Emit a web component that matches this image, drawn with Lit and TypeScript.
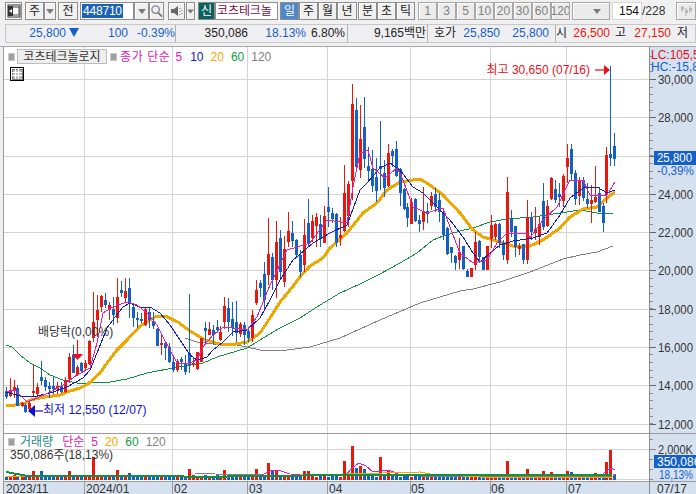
import { LitElement, html, css, svg } from "lit";
import { customElement } from "lit/decorators.js";

type Row = [number, string, number, number, number, number];
type Group = { bx: number; by: number; s: number; rows: Row[] };

const groups: Group[] = [
  { bx: 0, by: 270, s: 3, rows: [
    [18,"b",350,362,380,388],[30,"r",325,360,378,382],[42,"r",330,352,360,385],[52,"b",345,355,408,408],
    [66,"r",395,398,408,410],[76,"b",398,404,425,430],[88,"r",395,398,418,420],[100,"r",285,362,368,378],
    [112,"r",340,352,372,382],[124,"b",272,322,334,345],[136,"b",320,330,350,362],[148,"b",335,348,358,385],
    [160,"b",318,348,358,372],[172,"r",335,348,356,372],[184,"b",335,348,366,368],[196,"r",320,330,365,368],
    [208,"r",250,262,328,340],[220,"b",225,255,308,310],[232,"r",285,290,315,318],[244,"b",275,280,302,305],
    [256,"r",270,280,295,300],[268,"r",210,213,282,285],
  ]},
  { bx: 80, by: 270, s: 3, rows: [
    [40,"r",65,155,205,215],[52,"r",75,120,150,200],[64,"r",75,78,110,125],[76,"b",70,90,105,115],
    [88,"r",95,105,120,150],[100,"b",80,118,135,165],[112,"r",25,82,145,160],[124,"b",32,60,70,80],
    [136,"r",25,62,84,100],[148,"b",25,55,100,145],[160,"b",100,112,143,170],[172,"b",125,145,150,175],
    [184,"b",130,148,152,160],[196,"r",115,118,165,168],[208,"b",112,125,150,175],[220,"b",125,152,168,178],
    [232,"b",175,178,228,228],[244,"r",190,218,222,255],[256,"b",215,218,235,270],[268,"b",220,232,275,278],
    [280,"b",262,276,300,305],[292,"r",268,272,300,305],[304,"b",260,266,276,300],[316,"b",255,282,305,315],
    [328,"b",72,250,285,310],[340,"r",262,280,285,290],[352,"r",245,245,298,300],[364,"r",205,205,275,275],
    [376,"b",155,175,182,225],[388,"r",155,178,195,195],[400,"b",165,180,195,222],[412,"b",150,172,180,190],
    [421,"r",168,185,210,212],[433,"r",80,108,155,178],[445,"b",85,113,155,185],[457,"b",95,148,175,198],
    [470,"b",92,155,190,215],[482,"r",155,162,192,200],[494,"b",155,165,195,225],[506,"b",175,183,205,215],
    [518,"r",120,135,205,215],[530,"r",30,60,100,105],[542,"b",30,40,55,80],
  ]},
  { bx: 0, by: 0, s: 1, rows: [
    [264,"b",262,274,300,310],[268,"r",218,254,275,285],[272,"b",253,257,280,290],[276,"r",221,242,280,298],
    [280,"b",230,238,272,278],[284,"r",236,249,282,287],[300,"b",250,255,272,277],[304,"r",219,235,265,272],
  ]},
  { bx: 230, by: 70, s: 3, rows: [
    [175,"r",426,483,516,530],[187,"b",453,489,513,530],[199,"b",508,510,555,560],[235,"b",387,459,519,530],
    [247,"r",435,453,504,515],[259,"r",430,441,468,530],[271,"b",435,462,507,530],[283,"r",408,438,519,520],
    [295,"b",351,411,427,470],[307,"b",415,430,448,460],[319,"b",428,432,519,530],[331,"r",440,495,504,528],
    [343,"r",285,369,483,485],[355,"r",333,342,438,470],[367,"r",42,102,333,390],[379,"b",85,120,291,300],
    [391,"r",105,207,300,325],[403,"b",81,171,267,295],[415,"b",230,288,303,335],[427,"b",240,297,348,365],
    [439,"b",265,321,364,395],[451,"b",153,288,297,360],[463,"b",270,309,354,382],[475,"r",222,249,348,350],
    [487,"b",238,243,258,290],[499,"b",213,237,318,320],[511,"b",295,298,369,408],[523,"b",355,357,417,420],
    [533,"b",400,411,444,470],[545,"r",385,395,462,462],[557,"b",385,387,453,455],[569,"b",436,449,462,485],
  ]},
  { bx: 400, by: 170, s: 3, rows: [
    [70,"r",50,126,155,180],[82,"b",100,123,132,160],[94,"r",65,78,108,120],[106,"b",55,72,112,125],
    [118,"b",70,90,125,155],[130,"b",115,125,195,210],[142,"b",170,175,252,255],[154,"b",230,232,250,278],
    [166,"b",255,258,278,300],[178,"r",205,246,270,298],[190,"b",228,228,298,300],[202,"b",296,302,322,322],
    [214,"r",295,295,322,322],[226,"r",185,216,285,300],[238,"b",210,212,262,280],[250,"b",262,262,300,300],
    [262,"r",228,228,300,300],[274,"r",135,165,208,235],[286,"r",160,162,202,210],[298,"b",160,162,218,235],
  ]},
  { bx: 500, by: 140, s: 3, rows: [
    [10,"b",300,308,345,360],[22,"r",110,155,360,372],[34,"b",210,235,275,290],[46,"b",258,258,320,350],
    [58,"r",310,318,328,345],[70,"b",312,312,360,372],[82,"r",180,232,360,372],[94,"b",215,232,277,300],
    [106,"r",200,267,280,300],[118,"r",230,252,290,315],[130,"b",128,182,262,270],[142,"r",180,198,258,262],
    [154,"r",110,113,178,180],[166,"b",120,147,180,190],[178,"b",130,162,170,200],[190,"r",102,108,182,200],
    [202,"r",12,54,82,130],[214,"b",12,27,102,120],[226,"b",90,99,178,195],[238,"r",110,120,168,195],
    [250,"b",110,120,175,182],[262,"b",130,178,192,205],[274,"r",135,180,192,250],[286,"r",78,170,185,190],
    [298,"b",140,160,215,215],[310,"b",190,197,250,275],
  ]},
  { bx: 520, by: 60, s: 3, rows: [
    [258,"r",262,286,405,430],[271,"b",18,283,293,318],[284,"b",218,258,298,318],
  ]},
];

type C = { x: number; c: string; hi: number; t: number; b: number; lo: number };
const candles: C[] = groups
  .flatMap((g) =>
    g.rows.map((r) => ({
      x: Math.floor(g.bx + r[0] / g.s),
      c: r[1],
      hi: Math.round(g.by + r[2] / g.s),
      t: Math.round(g.by + r[3] / g.s),
      b: Math.round(g.by + r[4] / g.s),
      lo: Math.round(g.by + r[5] / g.s),
    }))
  )
  .sort((a, b) => a.x - b.x);

const RED = "#e8180c";
const BLUE = "#1560c8";

const ma20 = "6,406 15,405 25,403 30,400 45,397 60,395 67,392 80,388 88,384 100,373 107,363 117,350 127,340 140,326 155,317 165,316 178,322 190,331 205,340 220,344 230,345 247,342 260,333 270,318 280,302 290,290 300,277 310,266 323,258 330,248 347,233 363,213 377,203 387,190 400,182 420,179 430,185 443,195 460,213 473,230 483,237 500,242 513,246 530,246 543,240 560,228 570,217 583,209 597,207 607,198 615,192";
const ma60 = "6,345 12,347 20,355 30,363 40,368 50,375 63,380 77,383 90,383 110,382 127,379 147,373 173,368 203,363 217,357 247,348 260,340 280,328 300,318 320,305 340,293 360,284 380,274 400,263 417,253 433,240 443,236 460,231 473,228 490,222 507,219 533,217 560,213 580,210 597,213 613,214";
const ma120 = "185,338 197,342 213,344 237,345 247,347 260,350 280,351 310,347 340,338 380,320 420,303 460,291 473,289 500,282 530,272 563,259 580,255 597,252 613,246";
const ma10 = "6,392 20,396 33,397 50,393 67,387 83,378 90,370 97,353 107,328 115,317 123,307 130,303 140,307 150,307 160,313 170,325 180,340 190,355 197,360 207,357 213,350 223,342 233,332 247,330 260,318 270,300 280,280 293,260 313,243 330,233 347,225 360,190 367,183 380,168 390,163 400,170 413,187 423,193 437,207 450,220 463,237 473,253 480,262 490,253 500,245 513,241 533,238 547,233 560,215 570,198 583,188 597,187 607,193 615,190";
const ma5 = "6,392 15,390 20,395 27,402 37,398 50,392 63,385 77,375 90,368 97,343 103,313 113,307 127,302 137,305 147,313 157,325 163,337 170,350 177,363 187,364 197,360 203,347 213,335 223,327 233,328 247,330 257,317 270,285 287,250 297,247 310,243 327,220 347,223 353,187 360,153 368,150 373,168 385,178 397,168 403,180 413,207 427,213 443,208 450,227 460,253 473,263 487,260 497,243 507,233 527,233 530,238 543,220 557,207 570,180 583,180 590,195 600,195 607,195 615,182";

const volTops: Record<number, [number, string?]> = {
  33: [471], 41: [471], 69: [471], 93: [457, "r"], 117: [470], 129: [473], 189: [469, "r"], 224: [470, "r"], 257: [469, "r"],
  268: [463, "r"], 272: [470, "b"], 276: [470, "r"], 304: [471, "r"], 308: [471, "r"], 344: [461, "r"], 352: [446, "r"],
  356: [468, "b"], 360: [466, "r"], 364: [469, "b"], 380: [457, "r"], 388: [470, "r"], 507: [461, "r"], 527: [469, "r"],
  543: [471, "r"], 551: [472, "r"], 567: [471, "r"], 571: [472, "b"], 595: [473, "r"], 606: [462, "r"], 610: [450, "r"], 614: [474, "b"],
};

const volBars = candles.map((c, i) => {
  const key = Object.keys(volTops).map(Number).find((k) => Math.abs(k - c.x) <= 1);
  const o = key !== undefined ? volTops[key] : undefined;
  const top = o ? o[0] : 480 - (3 + (i * 7) % 3);
  const col = o && o[1] ? o[1] : c.c;
  return { x: c.x, top, col };
});

const yTicks: { y: number; l: string }[] = [
  { y: 79, l: "30,000" }, { y: 117, l: "28,000" }, { y: 156, l: "26,000" }, { y: 194, l: "24,000" },
  { y: 232, l: "22,000" }, { y: 270, l: "20,000" }, { y: 309, l: "18,000" }, { y: 347, l: "16,000" },
  { y: 385, l: "14,000" }, { y: 424, l: "12,000" },
];
const gridX = [84, 172, 247, 327, 410, 490, 566];
const dates: [number, string][] = [[6, "2023/11"], [86, "2024/01"], [174, "02"], [249, "03"], [329, "04"], [411, "05"], [491, "06"], [568, "07"]];
const minor: number[] = [];
for (let y = 56; y < 430; y += 7.65) minor.push(Math.round(y));

const Arrow = html`<svg class="tri" viewBox="0 0 10 6"><path d="M0 0h10L5 6z" fill="#7a7a7a"/></svg>`;

@customElement("app-root")
export class AppRoot extends LitElement {
  static styles = css`
    :host { display: block; width: 696px; height: 494px; overflow: hidden; background: #f0f0f0;
      font-family: "Liberation Sans", "Noto Sans CJK KR", sans-serif; font-size: 12px; color: #222; }
    .bar { display: flex; height: 24px; box-sizing: border-box; padding: 2px 0 0 5px; align-items: flex-start; }
    .btn { box-sizing: border-box; height: 18px; border: 1px solid #8e8e8e; background: #f0f0f0; display: flex;
      align-items: center; justify-content: center; font-size: 12px; line-height: 16px; color: #222; flex: none;
      box-shadow: inset 1px 1px 0 #fff; overflow: hidden; white-space: nowrap; }
    .w9 { width: 9px; } .w12 { width: 12px; } .w15 { width: 15px; } .w17 { width: 17px; }
    .w19 { width: 19px; } .w20 { width: 20px; } .w38 { width: 38px; }
    .ml1 { margin-left: 1px; } .ml2 { margin-left: 2px; } .ml3 { margin-left: 3px; } .ml4 { margin-left: 4px; }
    .input { width: 54px; background: #fff; justify-content: flex-start; padding-left: 1px; box-shadow: none; }
    .sel { background: #1a62b8; color: #fff; font-size: 12px; line-height: 14px; padding: 0 1px; letter-spacing: -0.2px; }
    .on { background: #4d88c8; color: #fff; box-shadow: none; }
    .off { background: #ebebeb; color: #808080; border-color: #a8a8a8; }
    .sin { width: 17px; background: #0c6060; color: #fff; box-shadow: none; border-color: #888; }
    .name { width: 63px; background: #fff; color: #7a0c44; justify-content: flex-start; padding-left: 1px; box-shadow: none; font-size: 12px; letter-spacing: -0.1px; }
    .count { width: 30px; background: #fff; justify-content: flex-end; padding-right: 2px; box-shadow: none; border-color: #d8d8d8; color: #111; }
    .total { width: 30px; line-height: 18px; color: #333; flex: none; }
    .tri { width: 8px; height: 5px; }
    .ico { width: 14px; height: 14px; display: block; }
    .spacer { width: 12px; }
    .info { display: flex; height: 19px; margin: 0 0 0 5px; box-sizing: border-box; border: 1px solid #c8c8c8; background: #efeff2;
      align-items: center; line-height: 17px; white-space: nowrap; }
    .cell { flex: none; text-align: right; box-sizing: border-box; }
    .sep { border-right: 1px solid #b0b0b0; height: 17px; }
    .blue { color: #1560c8; }
    .red { color: #e8180c; }
    .down { width: 10px; height: 9px; margin-left: 3px; }
    .c1 { width: 73px; } .c2 { width: 49px; } .c3 { width: 48px; } .c4 { width: 72px; } .c5 { width: 58px; }
    .c6 { width: 42px; padding-right: 2px; }
    .c7 { width: 80px; padding-right: 1px; } .c8 { width: 28px; } .c9 { width: 44px; }
    .c10 { width: 56px; padding-right: 6px; } .c11 { width: 10px; } .c12 { width: 44px; }
    .c13 { width: 16px; } .c14 { width: 45px; } .c15 { width: 17px; }
    .chart { position: relative; height: 448px; margin-top: 3px; width: 696px; }
    svg.plot { display: block; position: absolute; left: 0; top: 0; font-family: "Liberation Sans", "Noto Sans CJK KR", sans-serif; }
    .legend { position: absolute; display: flex; align-items: center; white-space: nowrap; font-size: 12px; line-height: 14px; }
    .lg1 { left: 8px; top: 3px; }
    .lg2 { left: 8px; top: 389px; }
    .sq { width: 5px; height: 6px; background: #a0a0a0; border: 1px solid #c8c8c8; flex: none; box-sizing: content-box; }
    .tag { box-sizing: border-box; width: 90px; height: 15px; margin: 0 3px 0 2px; border: 1px solid #bcbcbc; background: #eeeeee; text-align: center; color: #333; font-size: 12px; }
    .mag { color: #e020b0; } .nav { color: #1020b0; } .org { color: #f0a800; } .grn { color: #10a040; } .gry { color: #808080; } .teal { color: #1a8a8a; }
    .m3 { margin-left: 3px; } .m5 { margin-left: 5px; } .m7 { margin-left: 7px; } .m8 { margin-left: 8px; } .m9 { margin-left: 9px; }
    .wide { letter-spacing: 0.6px; }
    .grid-ico { position: absolute; left: 10px; top: 21px; }
  `;

  private plot() {
    return svg`<svg class="plot" width="696" height="448" viewBox="0 46 696 448" shape-rendering="crispEdges">
      <rect x="4" y="46" width="645" height="435" fill="#fff"/>
      <rect x="0" y="46" width="3" height="448" fill="#f0f0f0"/>
      <rect x="3" y="46" width="1" height="448" fill="#9a9a9a"/>
      <rect x="0" y="46" width="696" height="1" fill="#a8a8a8"/>
      <rect x="650" y="47" width="46" height="434" fill="#d6e1f0"/>
      <rect x="4" y="482" width="692" height="12" fill="#d6e1f0"/>
      ${yTicks.map((t) => svg`<rect x="4" y="${t.y}" width="645" height="1" fill="#d4d4d4"/>`)}
      ${gridX.map((x) => svg`<rect x="${x}" y="47" width="1" height="434" fill="#d4d4d4"/>`)}
      <rect x="4" y="449" width="645" height="1" fill="#d4d4d4"/>
      <rect x="4" y="479" width="645" height="1" fill="#d4d4d4"/>
      <rect x="4" y="433" width="692" height="1" fill="#9a9a9a"/>
      <rect x="4" y="481" width="692" height="1" fill="#9a9a9a"/>
      <rect x="649" y="47" width="1" height="447" fill="#8c8c8c"/>
      ${gridX.map((x) => svg`<rect x="${x}" y="482" width="1" height="12" fill="#9a9a9a"/>`)}
      ${minor.map((y) => svg`<rect x="650" y="${y}" width="3" height="1" fill="#8c8c8c"/>`)}
      ${yTicks.map((t) => svg`<rect x="650" y="${t.y}" width="6" height="1" fill="#666"/>`)}
      ${[439, 449, 459, 469, 479].map((y) => svg`<rect x="650" y="${y}" width="${y === 449 ? 6 : 3}" height="1" fill="#8c8c8c"/>`)}

      <g fill="none">
        <polyline points="${ma120}" stroke="#808080" stroke-width="1"/>
        <polyline points="${ma60}" stroke="#109040" stroke-width="1"/>
        <polyline points="${ma20}" stroke="#f0a800" stroke-width="3"/>
      </g>
      ${candles.map((c) => svg`
        <rect x="${c.x}" y="${c.hi}" width="1" height="${Math.max(c.lo - c.hi, 1)}" fill="${c.c === "r" ? RED : BLUE}"/>
        <rect x="${c.x - 1}" y="${c.t}" width="3" height="${Math.max(c.b - c.t, 2)}" fill="${c.c === "r" ? RED : BLUE}"/>`)}
      <g fill="none">
        <polyline points="${ma10}" stroke="#1020b0" stroke-width="1"/>
        <polyline points="${ma5}" stroke="#e020b0" stroke-width="1"/>
      </g>

      ${volBars.map((b) => svg`<rect x="${b.x - 1}" y="${b.top}" width="3" height="${480 - b.top}" fill="${b.col === "r" ? RED : BLUE}"/>`)}
      <g fill="none">
        <polyline points="262,475 272,470 281,471 290,474 346,475 351,469 359,463 366,466 373,472 389,470 400,475 600,476 611,468 615,470" stroke="#e020b0" stroke-width="1"/>
        <polyline points="195,473 215,474 262,475 346,475 420,476 470,477 612,476" stroke="#808080" stroke-width="1"/>
        <polyline points="6,477 30,476 90,476 170,476 195,478 262,476 300,475 346,474 420,472 430,474 480,477 612,477 615,474" stroke="#f0a800" stroke-width="1"/>
        <polyline points="6,472 17,474 28,476 172,476 195,477 260,476 346,475 420,475 612,475" stroke="#109040" stroke-width="2"/>
      </g>

      <g shape-rendering="auto">
        <text x="590" y="74" text-anchor="end" font-size="12" fill="#e8101c">최고 30,650 (07/16)</text>
        <path d="M595 70h10" stroke="#e8101c" stroke-width="1.2"/>
        <path d="M604 65l6 5-6 5z" fill="#e8101c"/>
        <text x="43" y="414" font-size="12" fill="#1010d0">최저 12,550 (12/07)</text>
        <path d="M35 411h8" stroke="#1010d0" stroke-width="1.2"/>
        <path d="M35 405l-7 6 7 6z" fill="#1010d0"/>
        <text x="38" y="336" font-size="12" fill="#333">배당락(0,00%)</text>
        <path d="M77.500 340v15" stroke="#e8101c" stroke-width="1.2"/>
        <path d="M72 354h11l-5.500 6z" fill="#e8101c"/>

        ${yTicks.map((t) => svg`<text x="658" y="${t.y + 5}" font-size="12" fill="#333" textLength="35" lengthAdjust="spacingAndGlyphs">${t.l}</text>`)}
        <text x="651" y="59" font-size="12" fill="#e8101c">LC:105,5</text>
        <text x="651" y="71" font-size="12" fill="${BLUE}">HC:-15,8</text>
        <rect x="654" y="151" width="42" height="14" fill="#1560c8"/>
        <text x="657" y="162" font-size="12" fill="#fff" textLength="35" lengthAdjust="spacingAndGlyphs">25,800</text>
        <text x="657" y="175" font-size="12" fill="${BLUE}" textLength="37" lengthAdjust="spacingAndGlyphs">-0,39%</text>
        <text x="658" y="454" font-size="12" fill="#333" textLength="35" lengthAdjust="spacingAndGlyphs">2,000K</text>
        <rect x="654" y="455" width="42" height="13" fill="#1560c8"/>
        <text x="657" y="466" font-size="12" fill="#fff">350,086</text>
        <text x="659" y="479" font-size="12" fill="${BLUE}" textLength="34" lengthAdjust="spacingAndGlyphs">18,13%</text>
        <text x="10" y="459" font-size="12" fill="#333">350,086주(18,13%)</text>
        ${dates.map(([x, l]) => svg`<text x="${x}" y="493" font-size="12" fill="#333">${l}</text>`)}
        <text x="657" y="493" font-size="12" fill="#333">07/17</text>
      </g>
    </svg>`;
  }

  render() {
    return html`
      <div class="bar">
        <div class="btn w17"><svg class="ico" viewBox="0 0 14 14"><rect x="1" y="1" width="12" height="12" fill="#fff" stroke="#333"/><rect x="5" y="3" width="7" height="8" fill="#fff" stroke="#444"/><path d="M1 2h5v10H1z" fill="#333"/><path d="M5 5L2 7l3 2z" fill="#fff"/></svg></div>
        <div class="btn w19 ml3">주</div>
        <div class="btn w12">${Arrow}</div>
        <div class="btn w20 ml2">전</div>
        <div class="btn input ml2"><span class="sel">448710</span></div>
        <div class="btn w15">${Arrow}</div>
        <div class="btn w15"><svg class="ico" viewBox="0 0 14 14"><circle cx="6" cy="5.500" r="4" fill="#eef" stroke="#888" stroke-width="1.500"/><path d="M9 9l4 4" stroke="#777" stroke-width="2"/></svg></div>
        <div class="btn w17 ml4"><svg class="ico" viewBox="0 0 14 14"><path d="M1 5h3l4-3v10L4 9H1z" fill="#666"/><path d="M10 4v1M10 7v1M10 10v1M12 6v1M12 9v1" stroke="#666"/></svg></div>
        <div class="btn w9 ml1">${Arrow}</div>
        <div class="btn sin ml3">신</div>
        <div class="btn name">코츠테크놀</div>
        <div class="btn w19 on ml2">일</div>
        <div class="btn w19">주</div>
        <div class="btn w19">월</div>
        <div class="btn w20">년</div>
        <div class="btn w19 ml1">분</div>
        <div class="btn w19">초</div>
        <div class="btn w19">틱</div>
        <div class="btn w19 off ml3">1</div>
        <div class="btn w19 off">3</div>
        <div class="btn w19 off">5</div>
        <div class="btn w19 off">10</div>
        <div class="btn w19 off">20</div>
        <div class="btn w19 off">30</div>
        <div class="btn w19 off">60</div>
        <div class="btn w19 off">120</div>
        <div class="btn w38 off ml2"><span class="spacer"></span>${Arrow}</div>
        <div class="btn count ml2">154</div>
        <div class="total">/228</div>
        <div class="btn w20 off ml4"><svg class="ico" viewBox="0 0 14 14"><path d="M3 2v6M7 4v8M11 2v7" stroke="#b8b8b8"/><path d="M2 3h3v3H2zM6 6h3v3H6zM10 4h3v3h-3z" fill="#b8b8b8"/></svg></div>
      </div>
      <div class="info">
        <span class="cell c1 blue">25,800<svg class="down" viewBox="0 0 10 9"><path d="M0 0h10L5 9z" fill="#1560c8"/></svg></span>
        <span class="cell c2 blue">100</span>
        <span class="cell c3 blue sep">-0.39%</span>
        <span class="cell c4">350,086</span>
        <span class="cell c5 blue">18.13%</span>
        <span class="cell c6 sep">6.80%</span>
        <span class="cell c7 sep">9,165백만</span>
        <span class="cell c8">호가</span>
        <span class="cell c9 blue">25,850</span>
        <span class="cell c10 blue sep">25,800</span>
        <span class="cell c11">시</span>
        <span class="cell c12 red">26,500</span>
        <span class="cell c13">고</span>
        <span class="cell c14 red">27,150</span>
        <span class="cell c15">저</span>
      </div>
      <div class="chart">
        ${this.plot()}
        <div class="legend lg1">
          <span class="sq"></span><span class="tag">코츠테크놀로지</span><span class="sq"></span>
          <span class="mag m3 wide">종가 단순</span><span class="mag m5">5</span><span class="nav m8">10</span><span class="org m7">20</span><span class="grn m7">60</span><span class="gry m7">120</span>
        </div>
        <svg class="grid-ico" width="14" height="14" viewBox="0 0 14 14" shape-rendering="crispEdges"><rect x="0.500" y="0.500" width="13" height="13" fill="#fff" stroke="#000"/><rect x="2" y="2" width="10" height="10" fill="#bbb" stroke="#777"/><path d="M5.500 2v10M8.500 2v10M2 5.500h10M2 8.500h10" stroke="#fff"/></svg>
        <div class="legend lg2">
          <span class="sq"></span><span class="teal m5">거래량</span><span class="mag m9">단순</span><span class="mag m7">5</span><span class="org m7">20</span><span class="grn m7">60</span><span class="gry m7">120</span>
        </div>
      </div>
    `;
  }
}
